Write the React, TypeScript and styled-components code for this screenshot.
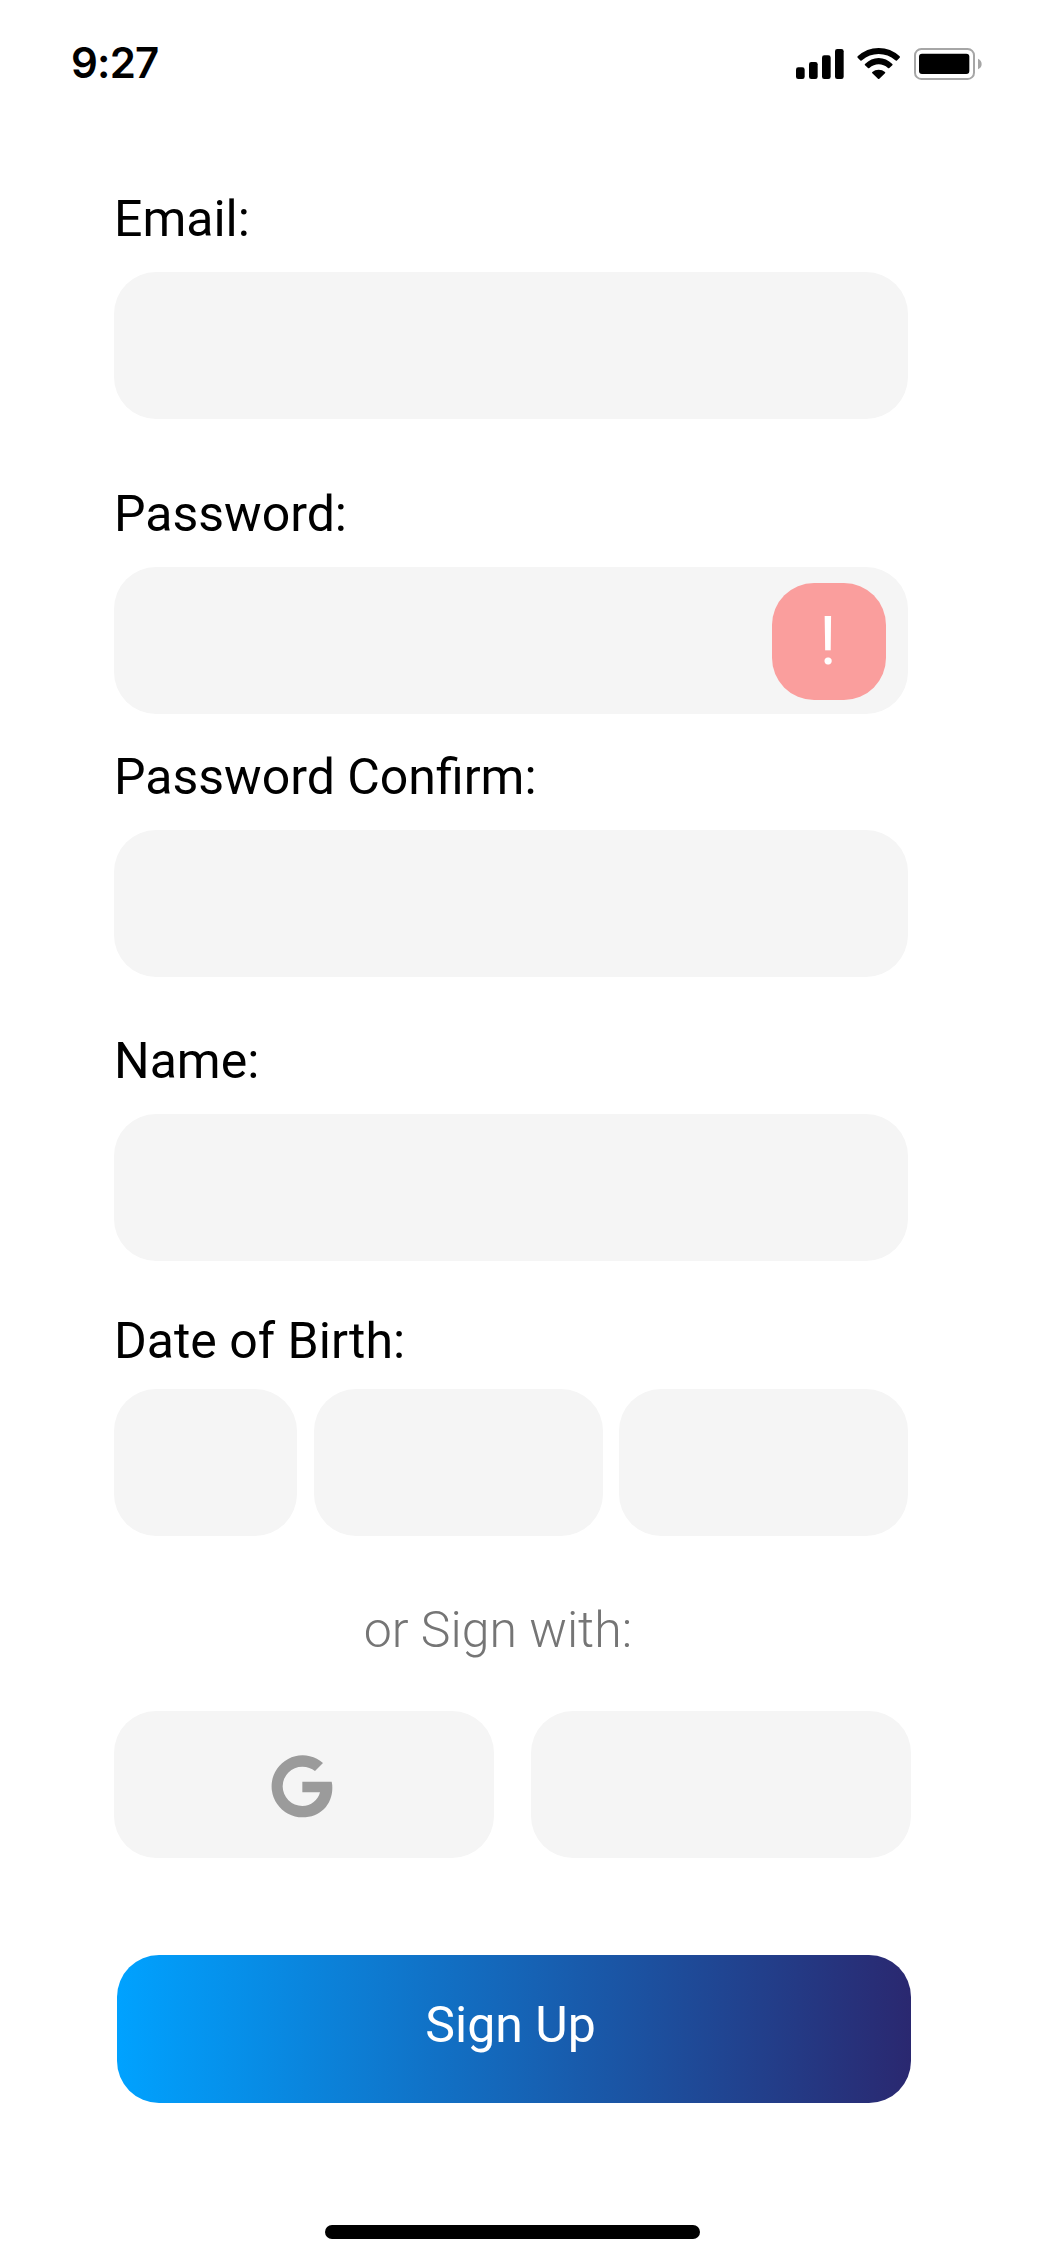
import React from "react";
import styled, { createGlobalStyle } from "styled-components";

const GlobalStyle = createGlobalStyle`
  *, *::before, *::after { box-sizing: border-box; }
  body { margin: 0; background: #fff; }
`;

const Screen = styled.div`
  display: flex;
  flex-direction: column;
  width: 1042px;
  height: 2256px;
  background: #fff;
  color: #000;
  font-family: Roboto, "Liberation Sans", sans-serif;
  overflow: hidden;
`;

const StatusBar = styled.header`
  display: flex;
  justify-content: space-between;
  align-items: flex-start;
  height: 190px;
  padding: 38px 60px 0 71px;
`;

const Clock = styled.time`
  font: 600 42px/50px Inter, sans-serif;
  letter-spacing: -0.8px;
`;

const StatusIcons = styled.div`
  display: flex;
  gap: 13px;
  padding-top: 10px;

  svg { display: block; }
`;

const Form = styled.form`
  display: flex;
  flex-direction: column;
  padding-left: 114px;
`;

const Field = styled.div<{ $gap?: number; $after: number }>`
  display: flex;
  flex-direction: column;
  gap: ${(p) => p.$gap ?? 24}px;
  width: 794px;
  margin-bottom: ${(p) => p.$after}px;
`;

const Label = styled.label`
  font-size: 50px;
  line-height: 58px;
  white-space: nowrap;
`;

const InputBox = styled.div`
  display: flex;
  align-items: center;
  height: 147px;
  padding-right: 22px;
  border-radius: 42px;
  background: #f5f5f5;
`;

const Input = styled.input`
  flex: 1;
  min-width: 0;
  height: 100%;
  padding: 0 40px;
  border: 0;
  outline: 0;
  background: transparent;
  font: 400 50px Roboto, sans-serif;
`;

const ErrorBadge = styled.span`
  display: flex;
  justify-content: center;
  width: 114px;
  height: 117px;
  margin-top: 2px;
  padding: 19px 2px 0 0;
  border-radius: 42px;
  background: #fa9e9d;
  color: #fff;
  font-size: 67px;
  line-height: 78px;
`;

const DateRow = styled.div`
  display: grid;
  grid-template-columns: 183px 289px 289px;
  column-gap: 16.5px;
`;

const Divider = styled.p`
  width: 768px;
  margin: 0 0 52px;
  color: #757575;
  font-size: 50px;
  font-weight: 300;
  line-height: 58px;
  text-align: center;
`;

const SocialRow = styled.div`
  display: grid;
  grid-template-columns: repeat(2, 380px);
  column-gap: 37px;
  margin-bottom: 97px;
`;

const SocialButton = styled.button`
  display: flex;
  align-items: center;
  justify-content: center;
  height: 147px;
  padding: 3px 5px 0 0;
  border: 0;
  border-radius: 42px;
  background: #f5f5f5;
`;

const SubmitButton = styled.button`
  width: 794px;
  height: 148px;
  margin-left: 3px;
  padding: 0 7px 8px 0;
  border: 0;
  border-radius: 42px;
  background: linear-gradient(90deg, #00a2ff, #2a2870);
  color: #fff;
  font: 400 50px/58px Roboto, sans-serif;
`;

const HomeIndicator = styled.div`
  width: 375px;
  height: 14px;
  margin: auto 0 17px 325px;
  border-radius: 7px;
  background: #000;
`;

const SignalIcon = () => (
  <svg width="48" height="32" viewBox="48 54 144 96">
    <rect x="48" y="112" width="26" height="35" rx="7" />
    <rect x="87" y="96" width="26" height="51" rx="7" />
    <rect x="126" y="76" width="26" height="71" rx="7" />
    <rect x="165" y="57" width="26" height="90" rx="7" />
  </svg>
);

const WifiIcon = () => (
  <svg width="44" height="32" viewBox="231 54 132 96">
    <path d="M233 79Q260 54 296 54T359 79Q361 81 359 83L350 92Q348 93 346 91Q324 72 296 72T246 91Q244 93 242 92L233 83Q231 81 233 79Z" />
    <path d="M255 102Q273 84 296 84T337 102Q339 104 337 106L328 114Q326 116 324 114Q311 103 296 103T268 114Q266 116 264 114L255 106Q253 104 255 102Z" />
    <path d="M277 126Q285 119 296 119T315 126Q317 128 315 130L298 146Q296 148 294 146L277 130Q275 128 277 126Z" />
  </svg>
);

const BatteryIcon = () => (
  <svg width="68" height="32" viewBox="402 54 204 96">
    <rect x="405" y="57" width="177" height="90" rx="19" fill="none" stroke="#a6a6a6" strokeWidth="6" />
    <rect x="417" y="71" width="151" height="61" rx="9" />
    <path d="M594 86Q605 91 605 102T594 118Z" fill="#a6a6a6" />
  </svg>
);

const GoogleIcon = () => (
  <svg width="62" height="63" viewBox="64 164 186 189" fill="#9b9b9b">
    <path d="M220 188A93 93 0 1 0 158 351C212 351 248 313 248 262Q248 252 246 244H158V276H211C205 300 184 317 158 317A59 59 0 1 1 158 199C173 199 186 204 196 212Z" />
  </svg>
);

export default function App() {
  return (
    <Screen>
      <GlobalStyle />
      <StatusBar>
        <Clock>9:27</Clock>
        <StatusIcons>
          <SignalIcon />
          <WifiIcon />
          <BatteryIcon />
        </StatusIcons>
      </StatusBar>

      <Form onSubmit={(e) => e.preventDefault()}>
        <Field $after={66}>
          <Label htmlFor="email">Email:</Label>
          <InputBox><Input id="email" type="email" /></InputBox>
        </Field>
        <Field $after={34}>
          <Label htmlFor="password">Password:</Label>
          <InputBox>
            <Input id="password" type="password" />
            <ErrorBadge>!</ErrorBadge>
          </InputBox>
        </Field>
        <Field $after={55}>
          <Label htmlFor="confirm">Password Confirm:</Label>
          <InputBox><Input id="confirm" type="password" /></InputBox>
        </Field>
        <Field $after={51}>
          <Label htmlFor="name">Name:</Label>
          <InputBox><Input id="name" /></InputBox>
        </Field>
        <Field $gap={19} $after={65}>
          <Label htmlFor="day">Date of Birth:</Label>
          <DateRow>
            <InputBox><Input id="day" /></InputBox>
            <InputBox><Input id="month" /></InputBox>
            <InputBox><Input id="year" /></InputBox>
          </DateRow>
        </Field>

        <Divider>or Sign with:</Divider>
        <SocialRow>
          <SocialButton type="button"><GoogleIcon /></SocialButton>
          <SocialButton type="button" />
        </SocialRow>
        <SubmitButton type="submit">Sign Up</SubmitButton>
      </Form>

      <HomeIndicator />
    </Screen>
  );
}
